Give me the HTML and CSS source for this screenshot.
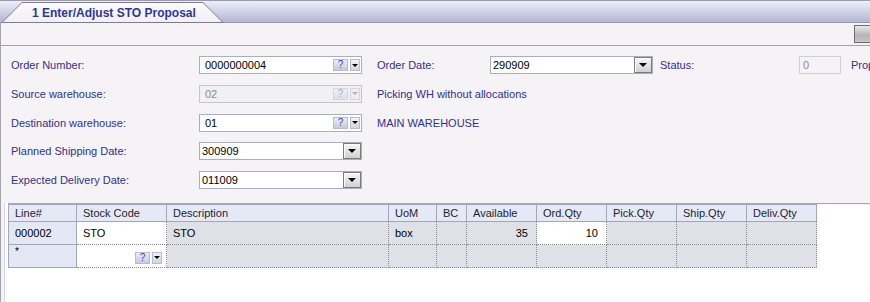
FILE: index.html
```html
<!DOCTYPE html>
<html lang="en">
<head>
<meta charset="UTF-8">
<link rel="stylesheet" href="styles.css">
<title>Enter/Adjust STO Proposal</title>
</head>
<body>
<div class="tabstrip">
    <div class="tab">
        <svg class="tab-shape" width="226" height="22" viewBox="0 0 226 22">
            <defs>
                <linearGradient id="tabfill" x1="0" y1="0" x2="0" y2="1">
                    <stop offset="0" stop-color="#fbfafd"/>
                    <stop offset="1" stop-color="#f1eff5"/>
                </linearGradient>
            </defs>
            <polygon points="2,21.5 22,1.5 203,1.5 223,21.5" fill="url(#tabfill)" stroke="#7c7c8c" stroke-width="1"/>
        </svg>
        <span class="tab-title">1 Enter/Adjust STO Proposal</span>
    </div>
</div>
<div class="page">
    <div class="toolbar">
        <div class="tool-btn"></div>
    </div>
    <div class="form">
        <div class="row">
            <span class="lbl col1">Order Number:</span>
            <div class="field"><span class="val">0000000004</span><span class="qbtn">?</span><span class="ddbtn"></span></div>
            <span class="lbl col2">Order Date:</span>
            <div class="field date"><span class="val">290909</span><span class="datebtn"></span></div>
            <span class="lbl col3">Status:</span>
            <div class="field status">0</div>
            <span class="lbl">Prop</span>
        </div>
        <div class="row">
            <span class="lbl col1">Source warehouse:</span>
            <div class="field disabled"><span class="val">02</span><span class="qbtn">?</span><span class="ddbtn"></span></div>
            <span class="lbl">Picking WH without allocations</span>
        </div>
        <div class="row">
            <span class="lbl col1">Destination warehouse:</span>
            <div class="field"><span class="val">01</span><span class="qbtn">?</span><span class="ddbtn"></span></div>
            <span class="lbl">MAIN WAREHOUSE</span>
        </div>
        <div class="row">
            <span class="lbl col1">Planned Shipping Date:</span>
            <div class="field date"><span class="val">300909</span><span class="datebtn"></span></div>
        </div>
        <div class="row">
            <span class="lbl col1">Expected Delivery Date:</span>
            <div class="field date"><span class="val">011009</span><span class="datebtn"></span></div>
        </div>
    </div>
    <div class="grid-wrap">
        <div class="grid">
            <div class="hd first">Line#</div>
            <div class="hd">Stock Code</div>
            <div class="hd">Description</div>
            <div class="hd">UoM</div>
            <div class="hd">BC</div>
            <div class="hd">Available</div>
            <div class="hd">Ord.Qty</div>
            <div class="hd">Pick.Qty</div>
            <div class="hd">Ship.Qty</div>
            <div class="hd">Deliv.Qty</div>

            <div class="rowhd">000002</div>
            <div class="cell edit">STO</div>
            <div class="cell">STO</div>
            <div class="cell">box</div>
            <div class="cell"></div>
            <div class="cell num">35</div>
            <div class="cell edit num">10</div>
            <div class="cell"></div>
            <div class="cell"></div>
            <div class="cell"></div>

            <div class="rowhd star">*</div>
            <div class="cell edit btns"><span class="qbtn">?</span><span class="ddbtn"></span></div>
            <div class="cell"></div>
            <div class="cell"></div>
            <div class="cell"></div>
            <div class="cell"></div>
            <div class="cell"></div>
            <div class="cell"></div>
            <div class="cell"></div>
            <div class="cell"></div>
        </div>
    </div>
</div>
</body>
</html>
```

FILE: styles.css
```css
body {
    margin: 0;
    width: 870px;
    height: 302px;
    overflow: hidden;
    background: #ffffff;
    font-family: "Liberation Sans", Arial, sans-serif;
    font-size: 11px;
    color: #000000;
}

/* tab strip */
.tabstrip {
    height: 21px;
    border-top: 1px solid #9c9cae;
    border-bottom: 1px solid #9898a8;
    background: linear-gradient(#eceefb, #b5b7d3);
    display: flex;
}

.tab {
    position: relative;
    width: 226px;
    height: 21px;
}

.tab-shape {
    position: absolute;
    left: 0;
    top: 0;
}

.tab-title {
    position: relative;
    display: block;
    padding: 2px 0 0 32px;
    line-height: 20px;
    font-size: 12px;
    font-weight: bold;
    color: #2b3896;
}

.page {
    border-left: 1px solid #a4a4b0;
    background: #f6f3f7;
    height: 279px;
}

/* toolbar */
.toolbar {
    height: 22px;
    border-bottom: 1px solid #a2a2ac;
    display: flex;
    justify-content: flex-end;
    align-items: flex-start;
}

.tool-btn {
    margin-top: 2px;
    width: 16px;
    height: 18px;
    box-sizing: border-box;
    border: 1px solid #6c6c6c;
    border-right: none;
    background: linear-gradient(#e8e8e8, #b4b4b4 60%, #c8c8c8);
}

/* form */
.form {
    padding: 10px 0 14px 10px;
    display: flex;
    flex-direction: column;
    gap: 10.75px;
}

.row {
    height: 18px;
    display: flex;
    align-items: center;
    white-space: nowrap;
    overflow: hidden;
}

.row > * {
    flex: none;
}

.lbl {
    color: #30308f;
}

.col1 {
    width: 188px;
}

.col2 {
    width: 113px;
}

.col3 {
    width: 139px;
}

.field {
    width: 163px;
    height: 18px;
    box-sizing: border-box;
    border: 1px solid #a9b0bc;
    background: #ffffff;
    display: flex;
    align-items: center;
    margin-right: 15px;
}

.field.date {
    margin-right: 7px;
}

.field .val {
    padding-left: 5px;
    flex: 1;
}

.field.date .val {
    padding-left: 2px;
}

.field.disabled {
    background: #f1f0f3;
    border-color: #c4c6cc;
    color: #8a8a8a;
}

.field.status {
    width: 42px;
    margin-right: 10px;
    padding-left: 3px;
    background: #f6f3f7;
    border-color: #cfcfd4;
    color: #8a8a8a;
}

.qbtn {
    width: 15px;
    height: 12px;
    box-sizing: border-box;
    border: 1px solid #b8bcc8;
    background: linear-gradient(#eceef6, #c6cad8);
    color: #3a3ac4;
    font-size: 10px;
    line-height: 10px;
    text-align: center;
}

.ddbtn {
    width: 10px;
    height: 12px;
    margin: 0 1px 0 2px;
    box-sizing: border-box;
    border: 1px solid #b8bcc8;
    background: linear-gradient(#f2f2f6, #d4d6de);
    display: flex;
    align-items: center;
    justify-content: center;
}

.ddbtn::after {
    content: "";
    border-left: 3px solid transparent;
    border-right: 3px solid transparent;
    border-top: 3px solid #000000;
}

.field.disabled .qbtn {
    color: #a8a0d0;
    background: linear-gradient(#f2f2f6, #dcdee6);
    border-color: #d4d6de;
}

.field.disabled .ddbtn {
    border-color: #d4d6de;
    background: #eeeef2;
}

.field.disabled .ddbtn::after {
    border-top-color: #b4b4b8;
}

.datebtn {
    width: 18px;
    height: 16px;
    box-sizing: border-box;
    border: 1px solid #7c7c7c;
    box-shadow: inset 1px 1px 0 #ffffff;
    background: linear-gradient(#f6f6f6, #d0d0d0);
    display: flex;
    align-items: center;
    justify-content: center;
}

.datebtn::after {
    content: "";
    border-left: 4px solid transparent;
    border-right: 4px solid transparent;
    border-top: 4px solid #000000;
}

/* line grid */
.grid-wrap {
    margin-left: 3px;
    height: 99px;
    border-left: 1px solid #d6d4dc;
    background: #ffffff;
}

.grid {
    margin-left: 3px;
    border-top: 1px solid #a8a8b2;
    display: grid;
    grid-template-columns: 69px 90px 222px 48px 30px 70px 70px 70px 70px 70px;
    grid-template-rows: 18px 23px 23px;
    width: 863px;
    background: linear-gradient(#f6f3f7, #f6f3f7) no-repeat;
    background-size: 100% 1px;
}

.hd {
    box-sizing: border-box;
    border-top: 1px solid #a2a6b8;
    border-right: 1px solid #a2a6b8;
    border-bottom: 1px solid #a2a6b8;
    background: #e5e9f5;
    color: #1e1e2e;
    padding-left: 6px;
    display: flex;
    align-items: center;
}

.hd.first,
.rowhd {
    border-left: 1px solid #a2a6b8;
}

.rowhd {
    box-sizing: border-box;
    border-right: 1px solid #a2a6b8;
    border-bottom: 1px solid #a2a6b8;
    background: #e4e8f4;
    padding-left: 6px;
    display: flex;
    align-items: center;
}

.rowhd.star {
    align-items: flex-start;
    padding-top: 1px;
    font-size: 10px;
}

.cell {
    box-sizing: border-box;
    border-right: 1px dotted #8c8c8c;
    border-bottom: 1px dotted #8c8c8c;
    background: #dee1e5;
    padding: 0 6px;
    display: flex;
    align-items: center;
}

.cell.edit {
    background: #ffffff;
}

.cell.num {
    justify-content: flex-end;
    padding-right: 8px;
}

.cell.btns {
    justify-content: flex-end;
    padding-right: 3px;
    padding-top: 3px;
}
```
